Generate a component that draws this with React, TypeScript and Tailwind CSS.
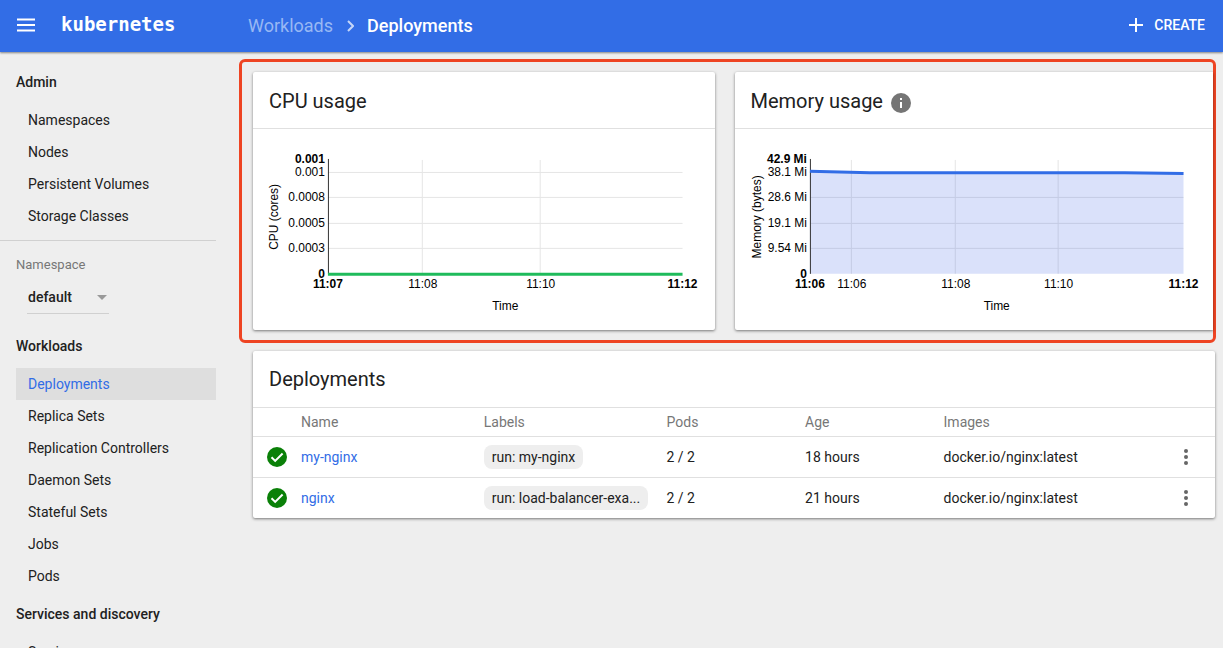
import { useState } from 'react';

const ADMIN_ITEMS = ['Namespaces', 'Nodes', 'Persistent Volumes', 'Storage Classes'];

const WORKLOAD_ITEMS = [
  'Deployments',
  'Replica Sets',
  'Replication Controllers',
  'Daemon Sets',
  'Stateful Sets',
  'Jobs',
  'Pods'
];

const DEPLOYMENTS = [
  { name: 'my-nginx', label: 'run: my-nginx', pods: '2 / 2', age: '18 hours', image: 'docker.io/nginx:latest' },
  { name: 'nginx', label: 'run: load-balancer-exa...', pods: '2 / 2', age: '21 hours', image: 'docker.io/nginx:latest' }
];

interface Tick {
  at: number;
  text: string;
  bold?: boolean;
}

interface UsageChartProps {
  width: number;
  left: number;
  right: number;
  axisLabel: string;
  axisLabelX: number;
  yTicks: Tick[];
  xTicks: Tick[];
  line: string;
  color: string;
  area?: string;
}

const CPU_CHART: UsageChartProps = {
  width: 462,
  left: 75,
  right: 430,
  axisLabel: 'CPU (cores)',
  axisLabelX: 25,
  yTicks: [
    { at: 30, text: '0.001', bold: true },
    { at: 43, text: '0.001' },
    { at: 68, text: '0.0008' },
    { at: 94, text: '0.0005' },
    { at: 119, text: '0.0003' },
    { at: 145, text: '0', bold: true }
  ],
  xTicks: [
    { at: 75, text: '11:07', bold: true },
    { at: 170, text: '11:08' },
    { at: 288, text: '11:10' },
    { at: 430, text: '11:12', bold: true }
  ],
  line: 'M75 145.5 H430',
  color: '#1fbb5b'
};

const MEMORY_CHART: UsageChartProps = {
  width: 479,
  left: 75,
  right: 449,
  axisLabel: 'Memory (bytes)',
  axisLabelX: 26,
  yTicks: [
    { at: 30, text: '42.9 Mi', bold: true },
    { at: 43, text: '38.1 Mi' },
    { at: 68, text: '28.6 Mi' },
    { at: 94, text: '19.1 Mi' },
    { at: 119, text: '9.54 Mi' },
    { at: 145, text: '0', bold: true }
  ],
  xTicks: [
    { at: 75, text: '11:06', bold: true },
    { at: 117, text: '11:06' },
    { at: 221, text: '11:08' },
    { at: 324, text: '11:10' },
    { at: 449, text: '11:12', bold: true }
  ],
  line: 'M75 42.3 L135 43.8 H390 L449 44.6',
  area: 'M75 42.3 L135 43.8 H390 L449 44.6 V145 H75 Z',
  color: '#326de6'
};

function UsageChart({ width, left, right, axisLabel, axisLabelX, yTicks, xTicks, line, color, area }: UsageChartProps) {
  return (
    <svg viewBox={`0 0 ${width} 201`} className="block w-full font-['Liberation_Sans',Arial,sans-serif] text-xs" role="img" aria-label={axisLabel}>
      {yTicks.filter((t) => !t.bold).map((t) => (
        <path key={t.text} d={`M${left} ${t.at + 0.5} H${right}`} stroke="#e5e5e5" />
      ))}
      {xTicks.filter((t) => !t.bold).map((t) => (
        <path key={t.text} d={`M${t.at - 0.5} 31 V145`} stroke="#e5e5e5" />
      ))}
      {area && <path d={area} fill="#3a5fe5" fillOpacity="0.19" />}
      <path d={`M${left + 0.5} 30 V145`} stroke="#333" />
      <path d={line} fill="none" stroke={color} strokeWidth="3" />
      {yTicks.map((t, i) => (
        <text key={i} x={left - 3} y={t.at + 4} textAnchor="end" fontWeight={t.bold ? 700 : 400}>
          {t.text}
        </text>
      ))}
      {xTicks.map((t, i) => (
        <text key={i} x={t.at} y="159" textAnchor="middle" fontWeight={t.bold ? 700 : 400}>
          {t.text}
        </text>
      ))}
      <text transform={`translate(${axisLabelX} 88) rotate(-90)`} textAnchor="middle">
        {axisLabel}
      </text>
      <text x={(left + right) / 2} y="181" textAnchor="middle">
        Time
      </text>
    </svg>
  );
}

function NavGroup({ title, items, active, onSelect }: { title: string; items: string[]; active: string; onSelect: (item: string) => void }) {
  return (
    <section>
      <h2 className="flex h-11 items-center text-sm font-medium">{title}</h2>
      <ul>
        {items.map((item) => (
          <li key={item}>
            <a
              href="#"
              onClick={() => onSelect(item)}
              className={`flex h-8 items-center pl-3 ${item === active ? 'bg-[#dedede] text-[#326de6]' : ''}`}
            >
              {item}
            </a>
          </li>
        ))}
      </ul>
    </section>
  );
}

export default function App() {
  const [active, setActive] = useState('Deployments');

  return (
    <div className="flex h-screen flex-col overflow-hidden bg-[#eee] font-[Roboto,sans-serif] text-sm text-[#212121]">
      <header className="z-10 flex h-[52px] shrink-0 items-center bg-[#326de6] pr-[18px] pl-4 text-white shadow-[0_1px_2px_rgba(0,0,0,0.45)]">
        <div className="flex w-[232px] shrink-0 items-center gap-[25px] pb-[2px]">
          <button aria-label="Toggle menu">
            <svg viewBox="0 0 20 14" className="h-[14px] w-5" fill="none" stroke="currentColor" strokeWidth="2">
              <path d="M1 1.5 H19 M1 7 H19 M1 12.5 H19" />
            </svg>
          </button>
          <a href="#" className="font-['DejaVu_Sans_Mono',monospace] text-[19px] font-bold">
            kubernetes
          </a>
        </div>
        <nav aria-label="Breadcrumb" className="flex flex-1 items-center text-lg">
          <a href="#" className="text-[#98b8f4]">
            Workloads
          </a>
          <svg viewBox="0 0 8 12" className="mx-[13px] h-3 w-2" fill="none" stroke="#c5d6f8" strokeWidth="2">
            <path d="M2 1 L7 6 L2 11" />
          </svg>
          <span className="font-medium">Deployments</span>
        </nav>
        <button className="flex items-center gap-[10px] pb-[2px] text-sm font-medium">
          <svg viewBox="0 0 16 16" className="size-4" fill="none" stroke="currentColor" strokeWidth="2">
            <path d="M8 1 V15 M1 8 H15" />
          </svg>
          CREATE
        </button>
      </header>

      <div className="flex min-h-0 flex-1">
        <aside className="w-60 shrink-0 overflow-hidden pt-2 pr-6 pl-4">
          <NavGroup title="Admin" items={ADMIN_ITEMS} active={active} onSelect={setActive} />
          <hr className="mt-2 -ml-4 border-[#d0d0d0]" />
          <div className="pt-3 pb-[10px]">
            <label htmlFor="namespace" className="flex h-6 items-center text-[13px] text-[#777]">
              Namespace
            </label>
            <div className="relative mt-1 ml-[11px] flex h-[33px] w-[82px] items-center border-b border-[#d0d0d0]">
              <select id="namespace" className="w-full appearance-none bg-transparent pl-px text-sm font-medium">
                <option>default</option>
              </select>
              <svg viewBox="0 0 10 5" className="pointer-events-none absolute right-[2px] h-[5px] w-[10px]" fill="#999">
                <path d="M0 0 H10 L5 5 Z" />
              </svg>
            </div>
          </div>
          <NavGroup title="Workloads" items={WORKLOAD_ITEMS} active={active} onSelect={setActive} />
          <NavGroup title="Services and discovery" items={['Services']} active={active} onSelect={setActive} />
        </aside>

        <main className="min-w-0 flex-1 pt-[7px] pr-[7px]">
          <div className="-ml-px flex gap-5 rounded-md border-3 border-[#ee4423] py-[10px] pl-[11px]">
            <section className="flex-[462] rounded-xs bg-white shadow-[0_1px_3px_rgba(0,0,0,0.5)]">
              <h2 className="flex h-14 items-center px-4 pt-[2px] text-xl">CPU usage</h2>
              <div className="border-t border-[#e0e0e0]">
                <UsageChart {...CPU_CHART} />
              </div>
            </section>
            <section className="flex-[479] rounded-l-xs bg-white shadow-[0_1px_3px_rgba(0,0,0,0.5)]">
              <h2 className="flex h-14 items-center gap-2 px-4 pt-[2px] text-xl">
                Memory usage
                <svg viewBox="0 0 20 20" className="mt-1 size-5" role="img" aria-label="Info">
                  <circle cx="10" cy="10" r="10" fill="#757575" />
                  <path d="M9 9 H11 V15 H9 Z M9 5 H11 V7 H9 Z" fill="#fff" />
                </svg>
              </h2>
              <div className="border-t border-[#e0e0e0]">
                <UsageChart {...MEMORY_CHART} />
              </div>
            </section>
          </div>

          <section className="mt-2 mr-px ml-[13px] rounded-xs bg-white shadow-[0_1px_3px_rgba(0,0,0,0.5)]">
            <h2 className="flex h-14 items-center px-4 text-xl">Deployments</h2>
            <table className="w-full table-fixed text-left">
              <thead className="text-[#777]">
                <tr className="h-[29px] border-t border-[#e0e0e0]">
                  <th className="w-12" aria-label="Status" />
                  <th className="w-[19%] font-normal">Name</th>
                  <th className="w-[19%] font-normal">Labels</th>
                  <th className="w-[14.4%] font-normal">Pods</th>
                  <th className="w-[14.4%] font-normal">Age</th>
                  <th className="font-normal">Images</th>
                  <th className="w-14" aria-label="Actions" />
                </tr>
              </thead>
              <tbody>
                {DEPLOYMENTS.map((d) => (
                  <tr key={d.name} className="h-[41px] border-t border-[#e0e0e0]">
                    <td className="pl-[14px]">
                      <svg viewBox="0 0 20 20" className="size-5" role="img" aria-label="Running">
                        <circle cx="10" cy="10" r="10" fill="#0a8008" />
                        <path d="M4.5 10.2 L8.2 13.9 L15.6 6.5" fill="none" stroke="#fff" strokeWidth="2" />
                      </svg>
                    </td>
                    <td>
                      <a href="#" className="text-[#326de6]">
                        {d.name}
                      </a>
                    </td>
                    <td className="pr-4">
                      <span className="block w-fit max-w-full truncate rounded-lg bg-[#eee] px-2 py-[2px]">{d.label}</span>
                    </td>
                    <td>{d.pods}</td>
                    <td>{d.age}</td>
                    <td>{d.image}</td>
                    <td>
                      <button aria-label={`Actions for ${d.name}`} className="ml-[25px] block">
                        <svg viewBox="0 0 4 16" className="h-4 w-1" fill="#666">
                          <circle cx="2" cy="2" r="2" />
                          <circle cx="2" cy="8" r="2" />
                          <circle cx="2" cy="14" r="2" />
                        </svg>
                      </button>
                    </td>
                  </tr>
                ))}
              </tbody>
            </table>
          </section>
        </main>
      </div>
    </div>
  );
}
